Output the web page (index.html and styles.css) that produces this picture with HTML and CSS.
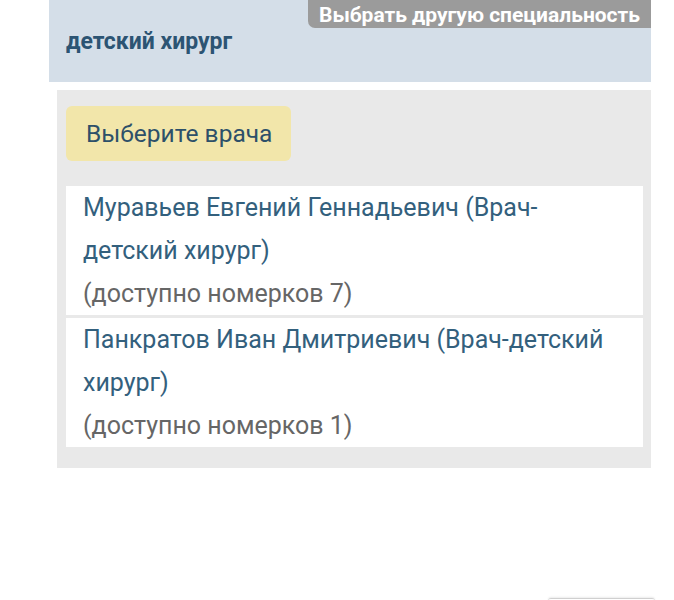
FILE: index.html
```html
<!DOCTYPE html>
<html lang="ru">
<head>
<meta charset="utf-8">
<link rel="stylesheet" href="styles.css">
</head>
<body>
<div class="page">
  <div class="spec">
    <div class="spec-title">детский хирург</div>
    <a class="spec-change">Выбрать другую специальность</a>
  </div>
  <div class="panel">
    <div class="choose">Выберите врача</div>
    <div class="doctors">
      <div class="doctor">
        <div class="doc-name">Муравьев Евгений Геннадьевич (Врач-детский хирург)</div>
        <div class="doc-avail">(доступно номерков 7)</div>
      </div>
      <div class="doctor">
        <div class="doc-name">Панкратов Иван Дмитриевич (Врач-детский хирург)</div>
        <div class="doc-avail">(доступно номерков 1)</div>
      </div>
    </div>
  </div>
</div>
<div class="footer-btn"></div>
</body>
</html>
```
FILE: styles.css
```css
html, body {
  margin: 0;
  padding: 0;
  background: #ffffff;
  font-family: Roboto, "Liberation Sans", sans-serif;
}
body {
  width: 674px;
  height: 600px;
  position: relative;
  overflow: hidden;
}
.page {
  margin-left: 49px;
  width: 602px;
}
.spec {
  position: relative;
  background: #d4dee8;
  height: 82px;
  display: flex;
  align-items: center;
  padding-left: 17px;
  box-sizing: border-box;
}
.spec-title {
  font-weight: bold;
  font-size: 23px;
  color: #2c5473;
  margin-top: 1px;
}
.spec-change {
  position: absolute;
  top: 0;
  right: 0;
  width: 343px;
  height: 28px;
  box-sizing: border-box;
  background: #9b9b9b;
  color: #ffffff;
  font-weight: bold;
  font-size: 21px;
  line-height: 30px;
  text-align: center;
  border-bottom-left-radius: 7px;
  white-space: nowrap;
  overflow: hidden;
}
.panel {
  margin-top: 8px;
  margin-left: 8px;
  background: #e9e9e9;
  padding: 16px 8px 21px 9px;
}
.choose {
  display: inline-block;
  background: #f2e6aa;
  color: #2d5069;
  font-size: 24.5px;
  line-height: 55px;
  padding: 0 19px 0 20px;
  border-radius: 6px;
}
.doctors {
  margin-top: 25px;
  display: flex;
  flex-direction: column;
  gap: 3px;
}
.doctor {
  background: #ffffff;
  padding: 0 17px 0 17px;
  font-size: 25px;
  line-height: 43px;
}
.doc-name {
  color: #33607d;
}
.doc-avail {
  color: #666666;
}
.footer-btn {
  position: absolute;
  left: 548px;
  top: 598px;
  width: 107px;
  height: 10px;
  border-top: 1px solid #d0d0d0;
  box-shadow: 0 -1px 2px rgba(0,0,0,0.08);
  border-radius: 3px 3px 0 0;
}
```
